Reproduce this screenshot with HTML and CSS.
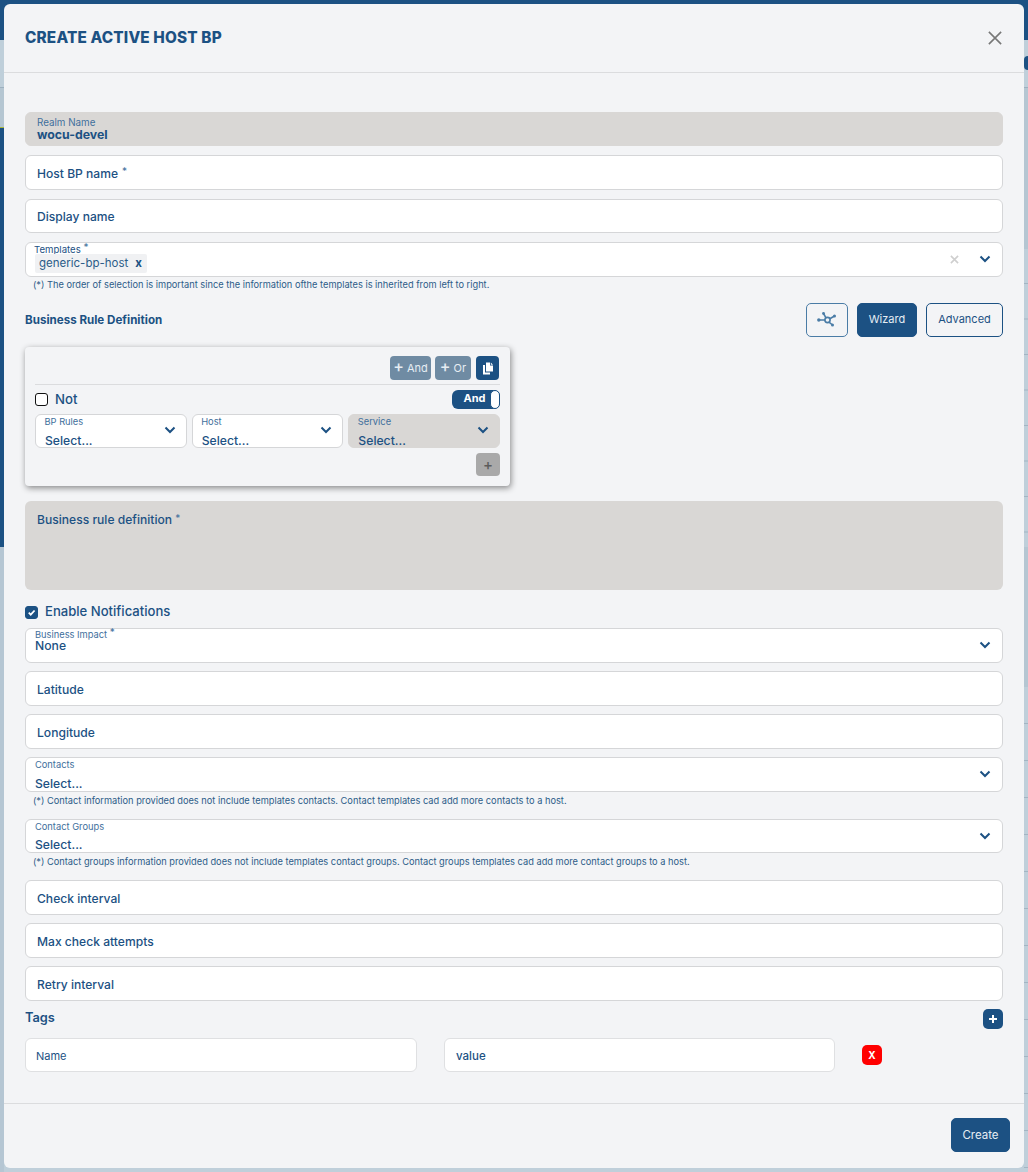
FILE: index.html
```html
<!DOCTYPE html>
<html lang="en">
<head>
<meta charset="utf-8">
<title>Create Active Host BP</title>
<link rel="stylesheet" href="styles.css">
</head>
<body>
<div class="backdrop">
  <div class="bg-top"></div>
  <div class="bg-columns">
    <div class="bg-left">
      <div class="bg-left-a"></div>
      <div class="bg-left-b"></div>
      <div class="bg-left-c"></div>
      <div class="bg-left-d"></div>
    </div>
    <div class="bg-right">
      <div class="bg-right-a"><span class="bg-blob"></span></div>
      <div class="bg-right-b"></div>
      <div class="bg-right-c"></div>
      <div class="bg-right-d"></div>
      <div class="bg-right-e"></div>
    </div>
  </div>
</div>
<main class="modal">
  <header class="modal-header">
    <h1 class="modal-title">CREATE ACTIVE HOST BP</h1>
    <svg class="close-icon" viewBox="0 0 16 16"><path d="M1 1L15 15M15 1L1 15"/></svg>
  </header>
  <section class="modal-body">
    <div class="field field-stacked field-disabled">
      <span class="mini-label mini-label-realm">Realm Name</span>
      <span class="stacked-value realm-value">wocu-devel</span>
    </div>
    <div class="field field-plain">Host BP name <span class="req">*</span></div>
    <div class="field field-plain">Display name</div>
    <div class="field field-select field-no-margin">
      <span class="mini-label mini-label-templates">Templates <span class="req">*</span></span>
      <span class="chip">generic-bp-host <b class="chip-x">x</b></span>
      <svg class="clear-icon" viewBox="0 0 10 10"><path d="M1 1L9 9M9 1L1 9"/></svg>
      <svg class="chevron chevron-wide" viewBox="0 0 12 8"><path d="M1.5 1.5L6 6L10.5 1.5"/></svg>
    </div>
    <p class="note note-templates">(*) The order of selection is important since the information ofthe templates is inherited from left to right.</p>

    <div class="rule-head">
      <h2 class="rule-title">Business Rule Definition</h2>
      <div class="rule-actions">
        <button class="btn btn-icon" type="button">
          <svg class="graph-icon" viewBox="0 0 20 16">
            <circle cx="10.5" cy="8" r="2.6"/>
            <path d="M2 8H8M12.8 6.8L17.5 4M12 10.2L15.5 13M9 5.8L6.5 1.5"/>
            <circle class="dot" cx="1.8" cy="8" r="1.7"/>
            <circle class="dot" cx="17.5" cy="4" r="1.5"/>
            <circle class="dot" cx="15.5" cy="13" r="1.5"/>
            <circle class="dot" cx="6.5" cy="1.5" r="1.4"/>
          </svg>
        </button>
        <button class="btn btn-solid btn-wizard" type="button">Wizard</button>
        <button class="btn btn-outline btn-advanced" type="button">Advanced</button>
      </div>
    </div>

    <div class="rule-card">
      <div class="card-tools">
        <button class="tool tool-muted tool-and" type="button"><span class="plus">+</span> And</button>
        <button class="tool tool-muted tool-or" type="button"><span class="plus">+</span> Or</button>
        <button class="tool tool-copy" type="button">
          <svg class="copy-icon" viewBox="0 0 12 13"><path d="M4 0.5H8V3.5H11V9.5H4Z"/><path d="M8.8 0.5L11 2.8H8.8Z"/><path d="M1 3H3V10.5H8V12.5H1Z"/></svg>
        </button>
      </div>
      <div class="card-row">
        <label class="not-label"><span class="box"></span>Not</label>
        <span class="toggle">And<span class="toggle-knob"></span></span>
      </div>
      <div class="card-selects">
        <div class="mini-select">
          <span class="mini-label">BP Rules</span>
          <span class="stacked-value select-value">Select...</span>
          <svg class="chevron chevron-big" viewBox="0 0 12 8"><path d="M1.5 1.5L6 6L10.5 1.5"/></svg>
        </div>
        <div class="mini-select">
          <span class="mini-label">Host</span>
          <span class="stacked-value select-value">Select...</span>
          <svg class="chevron chevron-big" viewBox="0 0 12 8"><path d="M1.5 1.5L6 6L10.5 1.5"/></svg>
        </div>
        <div class="mini-select mini-select-disabled">
          <span class="mini-label">Service</span>
          <span class="stacked-value select-value">Select...</span>
          <svg class="chevron chevron-big" viewBox="0 0 12 8"><path d="M1.5 1.5L6 6L10.5 1.5"/></svg>
        </div>
      </div>
      <div class="card-add"><button class="tool tool-add" type="button">+</button></div>
    </div>

    <div class="area">Business rule definition <span class="req">*</span></div>

    <label class="notify"><span class="box box-on"><svg viewBox="0 0 10 10"><path d="M2.5 5.2L4.3 7L7.8 3.2"/></svg></span>Enable Notifications</label>

    <div class="lower">
      <div class="field field-select">
        <span class="mini-label mini-label-impact">Business Impact <span class="req">*</span></span>
        <span class="stacked-value impact-value">None</span>
        <svg class="chevron chevron-wide" viewBox="0 0 12 8"><path d="M1.5 1.5L6 6L10.5 1.5"/></svg>
      </div>
      <div class="field field-plain">Latitude</div>
      <div class="field field-plain">Longitude</div>
      <div class="field field-select field-no-margin">
        <span class="mini-label mini-label-select">Contacts</span>
        <span class="stacked-value contact-value">Select...</span>
        <svg class="chevron chevron-wide" viewBox="0 0 12 8"><path d="M1.5 1.5L6 6L10.5 1.5"/></svg>
      </div>
      <p class="note note-contacts">(*) Contact information provided does not include templates contacts. Contact templates cad add more contacts to a host.</p>
      <div class="field field-select field-no-margin">
        <span class="mini-label mini-label-select">Contact Groups</span>
        <span class="stacked-value contact-value">Select...</span>
        <svg class="chevron chevron-wide" viewBox="0 0 12 8"><path d="M1.5 1.5L6 6L10.5 1.5"/></svg>
      </div>
      <p class="note note-groups">(*) Contact groups information provided does not include templates contact groups. Contact groups templates cad add more contact groups to a host.</p>
      <div class="field field-plain">Check interval</div>
      <div class="field field-plain">Max check attempts</div>
      <div class="field field-plain field-no-margin">Retry interval</div>
    </div>

    <div class="tags-head">
      <h2 class="tags-title">Tags</h2>
      <button class="tool tool-square" type="button"><svg class="plus-icon" viewBox="0 0 10 10"><path d="M5 1V9M1 5H9"/></svg></button>
    </div>
    <div class="tag-row">
      <div class="tag-input tag-name">Name</div>
      <div class="tag-input tag-value">value</div>
      <button class="tool tool-danger" type="button">X</button>
    </div>
  </section>
  <footer class="modal-footer">
    <button class="btn btn-solid btn-create" type="button">Create</button>
  </footer>
</main>
</body>
</html>
```

FILE: styles.css
```css
* { box-sizing: border-box; }
html, body { margin: 0; height: 100%; }
body {
  width: 1028px;
  height: 1172px;
  overflow: hidden;
  position: relative;
  background: #bfcfda;
  font-family: Inter, "Noto Sans", "Liberation Sans", sans-serif;
  color: #1c5183;
}

/* page dimmed behind the dialog */
.backdrop { position: absolute; inset: 0; display: flex; flex-direction: column; }
.bg-top { height: 40px; background: #1c5183; }
.bg-columns { flex: 1; display: flex; justify-content: space-between; }
.bg-left { width: 4px; display: flex; flex-direction: column; }
.bg-left-a { height: 47px; background: #bfcfda; }
.bg-left-b { height: 40px; background: #b5c6d2; border-top: 1px solid #9db0bf; }
.bg-left-c { height: 420px; background: #1c5183; border-top: 1px solid #a9b83f; }
.bg-left-d { flex: 1; background: #b5c6d3; }
.bg-right { width: 4px; display: flex; flex-direction: column; }
.bg-right-a { height: 47px; background: #bfcfda; padding-top: 16px; }
.bg-blob { display: block; height: 14px; background: #1c5183; border-radius: 4px 0 0 4px; }
.bg-right-b { height: 162px; background: #b5c6d2; border-top: 1px solid #9db0bf; }
.bg-right-c { height: 298px; background-image: linear-gradient(#bfcfda 34.5px, #a3b5c3 34.5px); background-size: 100% 35.5px; background-position: 0 35px; }
.bg-right-d { height: 140px; background: #b5c6d2; }
.bg-right-e { flex: 1; background-color: #bfcfda; background-image: linear-gradient(#bfcfda 36px, #a3b5c3 36px); background-size: 100% 37px; }

/* dialog */
.modal {
  position: absolute;
  left: 4px;
  top: 4px;
  width: 1020px;
  height: 1164px;
  display: flex;
  flex-direction: column;
  background: #f3f4f6;
  border-radius: 6px;
}
.modal-header {
  height: 69px;
  flex: none;
  display: flex;
  align-items: center;
  justify-content: space-between;
  padding: 0 22px 0 21px;
  border-bottom: 1px solid #dbdcde;
}
.modal-title { margin: 0 0 1px; font-size: 15.35px; font-weight: 800; letter-spacing: 0.15px; }
.close-icon { width: 14px; height: 14px; fill: none; stroke: #777; stroke-width: 1.8; }
.modal-body { flex: 1; padding: 38.5px 21px 0; }
.modal-footer {
  flex: none;
  height: 65px;
  display: flex;
  justify-content: flex-end;
  align-items: flex-start;
  padding: 14px 14px 0;
  border-top: 1px solid #dbdcde;
}

/* fields */
.field {
  position: relative;
  height: 34.5px;
  margin-bottom: 9px;
  background: #fff;
  border: 1px solid #d5d6d8;
  border-radius: 6px;
  font-size: 12.1px;
  font-weight: 500;
}
.lower .field { margin-bottom: 8.5px; }
.field-no-margin, .lower .field-no-margin { margin-bottom: 0; }
.field-plain { display: flex; align-items: center; gap: 4px; padding: 2px 0 0 11px; }
.field-disabled { background: #d9d7d5; border-color: #d9d7d5; }
.field-stacked { display: flex; flex-direction: column; padding: 4px 11px 0; }
.field-select { display: block; }
.req { position: relative; top: -2px; font-size: 10px; font-weight: 400; line-height: 1; color: #3f6f9c; }
.mini-label { display: block; font-size: 9.3px; font-weight: 400; line-height: 11px; color: #3f6f9c; }
.mini-label-realm { font-size: 9.8px; }
.mini-label-templates { position: absolute; left: 8px; top: 1px; font-size: 9.6px; color: #1c5183; }
.mini-label-select { position: absolute; left: 9px; top: 1px; }
.mini-label-impact { position: absolute; left: 9px; top: 0; }
.stacked-value { display: block; font-size: 12.2px; font-weight: 500; line-height: 14px; }
.realm-value { font-size: 12.3px; font-weight: 700; }
.impact-value { position: absolute; left: 9px; top: 10px; }
.contact-value { position: absolute; left: 9px; top: 18.5px; }
.chip {
  position: absolute;
  left: 9px;
  top: 11px;
  display: flex;
  align-items: center;
  height: 19px;
  padding: 0 5px 2px 4px;
  gap: 7px;
  background: #f0f1f3;
  border-radius: 2px;
  font-size: 11.5px;
  font-weight: 400;
  color: #2c5c88;
}
.chip-x { font-size: 11.5px; font-weight: 700; color: #1c5183; }
.clear-icon { position: absolute; right: 43px; top: 12px; width: 9px; height: 9px; fill: none; stroke: #cfcfcf; stroke-width: 1.8; }
.chevron { position: absolute; fill: none; stroke: #1c5183; stroke-width: 2; }
.chevron-wide { right: 11px; top: 12px; width: 12px; height: 8px; }
.note { margin: 0; height: 14px; padding-left: 8px; font-size: 9.25px; line-height: 16px; font-weight: 400; color: #2c5c88; white-space: nowrap; }
.note-templates { margin-bottom: 12.5px; }
.note-contacts { margin-bottom: 13px; line-height: 18px; }
.note-groups { margin-bottom: 13px; line-height: 18px; }

/* business rule */
.rule-head { display: flex; justify-content: space-between; align-items: flex-start; height: 34px; margin-bottom: 10px; }
.rule-title { margin: 10px 0 0; font-size: 11.6px; font-weight: 700; }
.rule-actions { display: flex; gap: 9px; }
.btn { height: 34px; padding: 0 0 2px; border-radius: 5px; font: 400 11px Inter, "Noto Sans", sans-serif; cursor: pointer; }
.btn-icon { width: 42px; padding: 0; display: flex; align-items: center; justify-content: center; background: transparent; border: 1px solid #4a7ca6; }
.graph-icon { width: 20px; height: 16px; fill: none; stroke: #4a7ca6; stroke-width: 1.6; }
.graph-icon .dot { fill: #4a7ca6; stroke: none; }
.btn-solid { background: #1c5183; border: 1px solid #1c5183; color: #e6edf3; }
.btn-wizard { width: 60px; }
.btn-outline { background: transparent; border: 1px solid #1c5183; color: #1c5183; }
.btn-advanced { width: 77px; }
.btn-create { width: 59px; padding: 0; font-size: 11.5px; }

.rule-card {
  width: 485px;
  height: 139px;
  margin-bottom: 15px;
  padding: 9px 10px 0;
  background: #f3f4f6;
  border-radius: 4px;
  box-shadow: 1px 2px 6px rgba(0, 0, 0, 0.45);
}
.card-tools { display: flex; justify-content: flex-end; gap: 4px; height: 29px; padding-right: 1px; border-bottom: 1px solid #dbdcde; }
.tool { height: 24px; padding: 0; border: 0; border-radius: 4px; font: 400 11px Inter, "Noto Sans", sans-serif; color: #e6edf3; cursor: pointer; }
.tool-muted { background: #6f8ba3; padding-bottom: 4px; }
.tool-muted .plus { font-size: 16px; line-height: 1; font-weight: 500; }
.tool-and { width: 41px; }
.tool-or { width: 36px; }
.tool-copy { width: 23px; margin-left: 1px; background: #1c5183; display: flex; align-items: center; justify-content: center; }
.copy-icon { width: 12px; height: 13px; fill: #fff; }
.card-row { display: flex; justify-content: space-between; align-items: center; height: 19px; margin: 5px 0; }
.not-label { display: flex; align-items: center; gap: 7px; padding-bottom: 1px; font-size: 13.2px; font-weight: 500; }
.box { display: block; width: 13px; height: 13px; background: #fff; border: 1px solid #111; border-radius: 3px; }
.toggle {
  display: flex;
  justify-content: center;
  position: relative;
  width: 48px;
  height: 19px;
  padding-right: 3px;
  background: #1c5183;
  border-radius: 6px;
  color: #fff;
  font-size: 11px;
  font-weight: 700;
  line-height: 17px;
}
.toggle-knob { position: absolute; right: 0; top: 0; width: 10px; height: 19px; background: #fff; border: 1px solid #1c5183; border-radius: 6px; }
.card-selects { display: flex; gap: 5px; }
.mini-select {
  position: relative;
  flex: 1;
  height: 34px;
  padding: 1px 8.5px;
  background: #fff;
  border: 1px solid #d5d6d8;
  border-radius: 6px;
}
.mini-select-disabled { background: #d9d7d5; border-color: #d9d7d5; }
.select-value { margin: 7px 0 0 0.5px; }
.chevron-big { right: 10px; top: 11px; width: 12px; height: 8px; }
.card-add { display: flex; justify-content: flex-end; margin-top: 5px; }
.tool-add { width: 24px; height: 23px; background: #a9a9a9; color: #5c5c5c; font-size: 15px; font-weight: 500; }

.area {
  height: 89px;
  margin-bottom: 14px;
  padding: 11px 12px;
  background: #d9d7d5;
  border-radius: 6px;
  font-size: 12.1px;
  font-weight: 500;
}
.notify { display: flex; align-items: center; gap: 7px; height: 16px; padding-bottom: 2px; margin-bottom: 8px; font-size: 13.1px; font-weight: 500; }
.box-on { background: #1c5183; border-color: #1c5183; margin-top: 2px; }
.box-on svg { display: block; width: 11px; height: 11px; fill: none; stroke: #fff; stroke-width: 1.6; }

/* tags */
.tags-head { display: flex; justify-content: space-between; align-items: center; height: 20px; margin: 8.5px 0 9px; }
.tags-title { margin: 0 0 3px; font-size: 12.8px; font-weight: 600; }
.tool-square { width: 20px; height: 20px; background: #1c5183; display: flex; align-items: center; justify-content: center; border-radius: 5px; }
.plus-icon { width: 10px; height: 10px; fill: none; stroke: #fff; stroke-width: 2; }
.tag-row { display: flex; align-items: center; gap: 27px; }
.tag-input {
  height: 34px;
  display: flex;
  align-items: center;
  padding-top: 2px;
  background: #fff;
  border: 1px solid #dfe0e2;
  border-radius: 6px;
  font-size: 11.5px;
}
.tag-name { width: 392px; padding-left: 10px; font-weight: 400; font-size: 11px; }
.tag-value { width: 391px; padding-left: 11px; font-weight: 500; }
.tool-danger { width: 20px; height: 20px; background: #ff0000; color: #fff; font-size: 10px; font-weight: 700; border-radius: 5px; }
```
